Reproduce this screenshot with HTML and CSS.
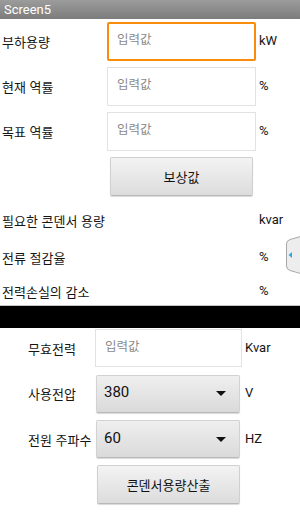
FILE: index.html
```html
<!DOCTYPE html>
<html lang="ko">
<head>
<meta charset="utf-8">
<title>Screen5</title>
<link rel="stylesheet" href="styles.css">
</head>
<body>
<div class="screen">
  <div class="titlebar">Screen5</div>

  <div class="sec1">
    <div class="row">
      <div class="label">부하용량</div>
      <div class="field focused">입력값</div>
      <div class="unit">kW</div>
    </div>
    <div class="row">
      <div class="label">현재 역률</div>
      <div class="field">입력값</div>
      <div class="unit">%</div>
    </div>
    <div class="row">
      <div class="label">목표 역률</div>
      <div class="field">입력값</div>
      <div class="unit">%</div>
    </div>
    <div class="row">
      <div class="label"></div>
      <div class="btn btn1">보상값</div>
    </div>
    <div class="results">
      <div class="rrow"><div class="rlabel">필요한 콘덴서 용량</div><div class="unit">kvar</div></div>
      <div class="rrow"><div class="rlabel">전류 절감율</div><div class="unit">%</div></div>
      <div class="rrow last"><div class="rlabel">전력손실의 감소</div><div class="unit">%</div></div>
    </div>
  </div>

  <div class="divider"></div>

  <div class="sec2">
    <div class="row2">
      <div class="label2">무효전력</div>
      <div class="field field2">입력값</div>
      <div class="unit2">Kvar</div>
    </div>
    <div class="row2">
      <div class="label2">사용전압</div>
      <div class="spinner"><span class="val">380</span><span class="caret"></span></div>
      <div class="unit2">V</div>
    </div>
    <div class="row2">
      <div class="label2">전원 주파수</div>
      <div class="spinner"><span class="val">60</span><span class="caret"></span></div>
      <div class="unit2">HZ</div>
    </div>
    <div class="row2">
      <div class="label2"></div>
      <div class="btn btn2">콘덴서용량산출</div>
    </div>
  </div>

  <div class="sidetab">
    <svg width="16" height="38" viewBox="0 0 16 38">
      <path d="M16.5 0.5 L6 3.5 Q2.5 4.5 2.5 8 L2.5 30 Q2.5 33.5 6 34.5 L16.5 37.5 Z" fill="#ededed" stroke="#a8a8a8" stroke-width="1"/>
      <path d="M4.5 19 L8 16 L8 22 Z" fill="#2fa9e0"/>
    </svg>
  </div>
</div>
</body>
</html>
```

FILE: styles.css
```css
* { box-sizing: border-box; }
html, body { margin: 0; padding: 0; background: #fff; }
body {
  font-family: Roboto, "Noto Sans CJK KR", sans-serif;
  color: #151515;
  width: 300px;
  height: 512px;
  overflow: hidden;
}
.screen { position: relative; width: 300px; height: 512px; }

.titlebar {
  height: 19px;
  background: linear-gradient(#9c9c9c, #7c7c7c);
  color: #fff;
  font-size: 13px;
  line-height: 19px;
  padding-left: 4px;
}

.sec1 {
  display: flex;
  flex-direction: column;
  gap: 6px;
  padding-top: 3px;
  height: 286px;
}
.row { display: flex; align-items: center; height: 39px; }
.label {
  width: 107px;
  padding-left: 2px;
  font-family: "Noto Sans CJK KR", sans-serif;
  font-size: 13px;
}
.field {
  width: 149px;
  height: 39px;
  border: 1px solid #e2e2e2;
  background: #fff;
  color: #8a8a8a;
  font-family: "Noto Sans CJK KR", sans-serif;
  font-size: 12.5px;
  padding: 6px 0 0 9px;
}
.field.focused {
  border: 2px solid #f98c0a;
  border-radius: 2px;
  padding: 5px 0 0 8px;
}
.unit {
  margin-left: 3px;
  font-size: 13px;
  padding-bottom: 2px;
}
.btn {
  height: 39px;
  width: 143px;
  background: linear-gradient(#f3f3f3, #dcdcdc);
  border: 1px solid #d0d0d0;
  border-bottom-color: #b8b8b8;
  border-radius: 2px;
  box-shadow: 0 1px 1px rgba(0,0,0,0.15);
  display: flex;
  align-items: center;
  justify-content: center;
  font-family: "Noto Sans CJK KR", sans-serif;
  font-size: 13px;
  color: #111;
}
.btn1 { margin-left: 3px; }

.results { display: flex; flex-direction: column; padding-top: 0; }
.rrow { display: flex; align-items: center; height: 37px; }
.rrow.last { height: 31px; }
.rlabel {
  width: 259px;
  padding-left: 2px;
  font-family: "Noto Sans CJK KR", sans-serif;
  font-size: 13px;
}
.rrow .unit { margin-left: 0; }

.divider {
  height: 23px;
  background: #000;
  border-top: 1px solid #c4c4c4;
}

.sec2 {
  display: flex;
  flex-direction: column;
  gap: 7.5px;
  padding-top: 1px;
}
.row2 { display: flex; align-items: center; height: 38px; }
.label2 {
  width: 95px;
  padding-left: 28px;
  font-family: "Noto Sans CJK KR", sans-serif;
  font-size: 13px;
  white-space: nowrap;
}
.field2 { width: 147px; height: 38px; }
.unit2 { margin-left: 3px; font-size: 13px; padding-bottom: 2px; }
.spinner {
  width: 144px;
  height: 38px;
  margin-left: 1px;
  margin-right: 2px;
  background: linear-gradient(#efefef, #dadada);
  border: 1px solid #d2d2d2;
  border-bottom-color: #b8b8b8;
  border-radius: 2px;
  box-shadow: 0 1px 1px rgba(0,0,0,0.15);
  display: flex;
  align-items: center;
  justify-content: space-between;
  padding: 0 13px 0 7px;
}
.val { font-size: 15px; color: #111; padding-bottom: 3px; }
.caret {
  width: 0; height: 0;
  border-left: 5.5px solid transparent;
  border-right: 5.5px solid transparent;
  border-top: 5px solid #111;
}
.btn2 { margin-left: 2px; }

.sidetab {
  position: absolute;
  right: 0;
  top: 236px;
  width: 16px;
  height: 38px;
}
.sidetab svg { display: block; }
```
